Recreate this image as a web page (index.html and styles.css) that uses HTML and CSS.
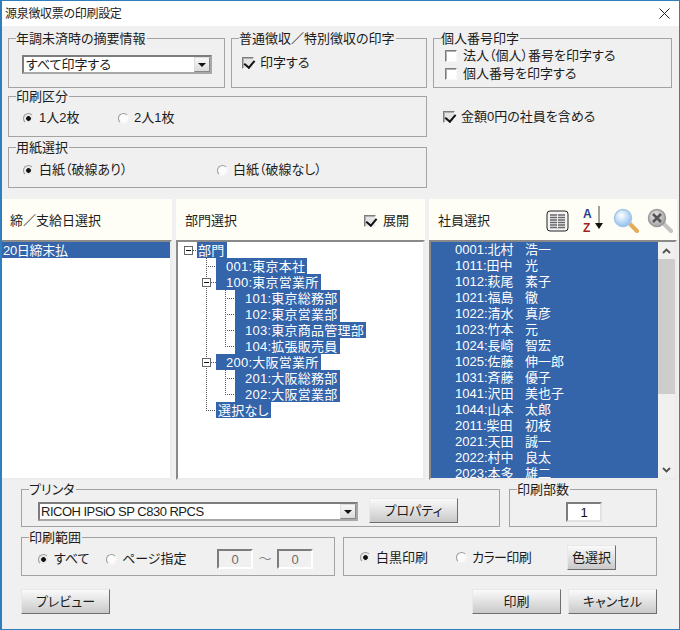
FILE: index.html
```html
<!DOCTYPE html>
<html lang="ja">
<head>
<meta charset="utf-8">
<title>源泉徴収票の印刷設定</title>
<link rel="stylesheet" href="styles.css">
</head>
<body>
<div class="window">
  <header class="titlebar">
    <span class="title">源泉徴収票の印刷設定</span>
    <svg class="close" width="11" height="11" viewBox="0 0 11 11"><path d="M.5.5l10 10M10.5.5l-10 10" stroke="#222" fill="none"/></svg>
  </header>

  <section class="top">
    <div class="group g-note">
      <div class="legend">年調未済時の摘要情報</div>
      <div class="combo combo-note"><span class="combo-text">すべて印字する</span><span class="combo-btn"><i class="tri"></i></span></div>
    </div>
    <div class="group g-print">
      <div class="legend">普通徴収／特別徴収の印字</div>
      <label class="opt opt-print"><input type="checkbox" class="check" checked>印字する</label>
    </div>
    <div class="group g-number">
      <div class="legend">個人番号印字</div>
      <label class="opt opt-num1"><input type="checkbox" class="check">法人（個人）番号を印字する</label>
      <label class="opt opt-num2"><input type="checkbox" class="check">個人番号を印字する</label>
    </div>
    <div class="group g-wide">
      <div class="legend">印刷区分</div>
      <div class="radios radios-kind">
        <label class="opt"><input type="radio" class="radio" name="kind" checked>1人2枚</label>
        <label class="opt"><input type="radio" class="radio" name="kind">2人1枚</label>
      </div>
    </div>
    <label class="opt opt-zero"><input type="checkbox" class="check" checked>金額0円の社員を含める</label>
    <div class="group g-wide g-paper">
      <div class="legend">用紙選択</div>
      <div class="radios radios-paper">
        <label class="opt"><input type="radio" class="radio" name="paper" checked>白紙（破線あり）</label>
        <label class="opt"><input type="radio" class="radio" name="paper">白紙（破線なし）</label>
      </div>
    </div>
  </section>

  <section class="panels">
    <div class="panel">
      <div class="panel-head"><span>締／支給日選択</span></div>
      <div class="list list-days"><div class="day">20日締末払</div></div>
    </div>
    <div class="panel">
      <div class="panel-head head-dept">
        <span>部門選択</span>
        <label class="opt opt-expand"><input type="checkbox" class="check" checked>展開</label>
      </div>
      <div class="list tree">
        <svg class="tree-lines" width="120" height="180" viewBox="0 0 120 180">
          <g fill="none" stroke="#555" stroke-dasharray="1 1">
            <path d="M15 8.5h4M28.500 16v152M28 24.500h10M33 40.500h5M33 120.500h5M28 168.500h10"/>
            <path d="M47.500 48v56M47 56.500h10M47 72.500h10M47 88.500h10M47 104.500h10"/>
            <path d="M47.500 128v24M47 136.500h10M47 152.500h10"/>
          </g>
          <g fill="#fff" stroke="#666">
            <rect x="6.500" y="4.500" width="8" height="8"/>
            <rect x="24.500" y="36.500" width="8" height="8"/>
            <rect x="24.500" y="116.500" width="8" height="8"/>
          </g>
          <path d="M8 8.500h5M26 40.500h5M26 120.500h5" stroke="#111"/>
        </svg>
        <div class="node-row"><span class="node lv0">部門</span></div>
        <div class="node-row"><span class="node lv1">001:東京本社</span></div>
        <div class="node-row"><span class="node lv1">100:東京営業所</span></div>
        <div class="node-row"><span class="node lv2">101:東京総務部</span></div>
        <div class="node-row"><span class="node lv2">102:東京営業部</span></div>
        <div class="node-row"><span class="node lv2">103:東京商品管理部</span></div>
        <div class="node-row"><span class="node lv2">104:拡張販売員</span></div>
        <div class="node-row"><span class="node lv1">200:大阪営業所</span></div>
        <div class="node-row"><span class="node lv2">201:大阪総務部</span></div>
        <div class="node-row"><span class="node lv2">202:大阪営業部</span></div>
        <div class="node-row"><span class="node lv1 none">選択なし</span></div>
      </div>
    </div>
    <div class="panel">
      <div class="panel-head head-emp">
        <span class="emp-title">社員選択</span>
        <svg class="ic-table" width="23" height="22" viewBox="0 0 23 22">
          <rect x="1" y="1" width="21" height="20" rx="3" fill="#f4f4f4" stroke="#222"/>
          <path d="M4 5h15M4 7.500h15M4 10h15M4 12.500h15M4 15h15M4 17.500h15" stroke="#666" stroke-width="1.500"/>
          <path d="M11.500 4v14" stroke="#eee"/>
        </svg>
        <span class="ic-sort"><span class="sort-letters"><b class="sort-a">A</b><b class="sort-z">Z</b></span>
          <svg width="8" height="25" viewBox="0 0 8 25"><path d="M4 0v20" stroke="#444"/><path d="M0 17h8l-4 6z" fill="#111"/></svg>
        </span>
        <svg class="ic-lens" width="26" height="25" viewBox="0 0 26 25">
          <defs><radialGradient id="lensBlue" cx=".4" cy=".35" r=".7"><stop offset="0" stop-color="#fff"/><stop offset="1" stop-color="#8cbcf0"/></radialGradient></defs>
          <path d="M16 15l8 8" stroke="#e3ad58" stroke-width="4" stroke-linecap="round"/>
          <circle cx="10" cy="10" r="8.500" fill="url(#lensBlue)" stroke="#a4c6e6" stroke-width="1.500"/>
        </svg>
        <svg class="ic-clear" width="26" height="25" viewBox="0 0 26 25">
          <defs><radialGradient id="lensGray" cx=".4" cy=".35" r=".7"><stop offset="0" stop-color="#e6e6e6"/><stop offset="1" stop-color="#a0a0a0"/></radialGradient></defs>
          <path d="M16 15l8 8" stroke="#c4c4c4" stroke-width="4" stroke-linecap="round"/>
          <circle cx="10" cy="10" r="8.500" fill="url(#lensGray)" stroke="#9a9a9a" stroke-width="1.500"/>
          <path d="M6 6l8 8M14 6l-8 8" stroke="#555" stroke-width="2.500"/>
        </svg>
      </div>
      <div class="list emp">
        <div class="emp-rows">
          <div class="emp-row"><span class="emp-name">0001:北村</span><span>浩一</span></div>
          <div class="emp-row"><span class="emp-name">1011:田中</span><span>光</span></div>
          <div class="emp-row"><span class="emp-name">1012:萩尾</span><span>素子</span></div>
          <div class="emp-row"><span class="emp-name">1021:福島</span><span>徹</span></div>
          <div class="emp-row"><span class="emp-name">1022:清水</span><span>真彦</span></div>
          <div class="emp-row"><span class="emp-name">1023:竹本</span><span>元</span></div>
          <div class="emp-row"><span class="emp-name">1024:長崎</span><span>智宏</span></div>
          <div class="emp-row"><span class="emp-name">1025:佐藤</span><span>伸一郎</span></div>
          <div class="emp-row"><span class="emp-name">1031:斉藤</span><span>優子</span></div>
          <div class="emp-row"><span class="emp-name">1041:沢田</span><span>美也子</span></div>
          <div class="emp-row"><span class="emp-name">1044:山本</span><span>太郎</span></div>
          <div class="emp-row"><span class="emp-name">2011:柴田</span><span>初枝</span></div>
          <div class="emp-row"><span class="emp-name">2021:天田</span><span>誠一</span></div>
          <div class="emp-row"><span class="emp-name">2022:村中</span><span>良太</span></div>
          <div class="emp-row"><span class="emp-name">2023:本多</span><span>雄二</span></div>
        </div>
        <div class="scrollbar">
          <span class="sb-btn"><svg width="9" height="6" viewBox="0 0 9 6"><path d="M1 5l3.500-3.500L8 5" fill="none" stroke="#505050" stroke-width="1.800"/></svg></span>
          <span class="sb-thumb"></span>
          <span class="sb-track"></span>
          <span class="sb-btn"><svg width="9" height="6" viewBox="0 0 9 6"><path d="M1 1l3.500 3.500L8 1" fill="none" stroke="#505050" stroke-width="1.800"/></svg></span>
        </div>
      </div>
    </div>
  </section>

  <section class="bottom">
    <div class="bottom-row row-printer">
      <div class="group g-printer">
        <div class="legend">プリンタ</div>
        <div class="printer-line">
          <div class="combo combo-printer"><span class="combo-text">RICOH IPSiO SP C830 RPCS</span><span class="combo-btn"><i class="tri"></i></span></div>
          <button class="btn btn-prop">プロパティ</button>
        </div>
      </div>
      <div class="group g-copies">
        <div class="legend">印刷部数</div>
        <input class="num num-copies" value="1">
      </div>
    </div>
    <div class="bottom-row row-range">
      <div class="group g-half">
        <div class="legend">印刷範囲</div>
        <div class="range-line">
          <label class="opt opt-all"><input type="radio" class="radio" name="range" checked>すべて</label>
          <label class="opt opt-page"><input type="radio" class="radio" name="range">ページ指定</label>
          <input class="num num-page" value="0" disabled>
          <span class="tilde">〜</span>
          <input class="num num-page" value="0" disabled>
        </div>
      </div>
      <div class="group g-half">
        <div class="color-line">
          <label class="opt opt-mono"><input type="radio" class="radio" name="color" checked>白黒印刷</label>
          <label class="opt opt-color"><input type="radio" class="radio" name="color">カラー印刷</label>
          <button class="btn btn-color">色選択</button>
        </div>
      </div>
    </div>
    <div class="bottom-row row-actions">
      <button class="btn btn-action">プレビュー</button>
      <div class="actions-right">
        <button class="btn btn-action">印刷</button>
        <button class="btn btn-action">キャンセル</button>
      </div>
    </div>
  </section>
</div>
</body>
</html>
```
FILE: styles.css
```css
* { box-sizing: border-box; }
html, body { margin: 0; padding: 0; }
body {
  font-family: "Liberation Sans", "Noto Sans CJK JP", sans-serif;
  font-size: 13px;
  line-height: 16px;
  color: #1c1c1c;
  font-feature-settings: "palt";
}
.window {
  width: 680px;
  height: 630px;
  background: #f0f0f0;
  border: 1px solid #2f7fbf;
  border-left-width: 2px;
  overflow: hidden;
}

/* title bar */
.titlebar {
  height: 25px;
  background: #fff;
  display: flex;
  align-items: center;
  justify-content: space-between;
  padding: 0 5px 0 3px;
}
.title { font-size: 12px; letter-spacing: -.3px; }
.close { margin-right: 4px; }

/* group boxes */
.group {
  border: 1px solid #a3a3a3;
  min-width: 0;
}
.legend {
  width: fit-content;
  margin: -8px 0 0 7px;
  padding: 0 1px 0 0;
  background: #f0f0f0;
}

/* options */
.opt {
  display: flex;
  align-items: center;
  white-space: nowrap;
}
.check, .radio {
  appearance: none;
  margin: 0;
  flex: none;
  position: relative;
}
.check {
  width: 12px;
  height: 12px;
  margin-right: 6px;
  background: #fff;
  border: 1px solid;
  border-color: #7d7d7d #f8f8f8 #f8f8f8 #7d7d7d;
  box-shadow: inset 1px 1px 0 #b0b0b0;
}
.check:checked { background: #e4e4e4; }
.check:checked::after {
  content: "";
  position: absolute;
  left: 3px;
  top: 0;
  width: 5px;
  height: 8px;
  border: solid #111;
  border-width: 0 2px 2px 0;
  transform: rotate(40deg);
}
.radio {
  width: 11px;
  height: 11px;
  margin-right: 5px;
  border-radius: 50%;
  background: #fbfbfb;
  border: 1px solid;
  border-color: #9a9a9a #f4f4f4 #f4f4f4 #9a9a9a;
}
.radio:checked {
  background: radial-gradient(circle at 50% 50%, #111 0 2px, #e8e8e8 2.7px);
}

/* top area */
.top {
  display: grid;
  grid-template-columns: 217px 196px 239px;
  grid-template-rows: 50px 41px 41px;
  column-gap: 6px;
  row-gap: 8px;
  padding: 12px 0 0 6px;
}
.g-wide { grid-column: 1 / 3; }
.g-paper { margin-top: 2px; height: 41px; }
.combo {
  display: flex;
  align-items: center;
  height: 19px;
  background: #fff;
  border: 2px solid;
  border-color: #7d7d7d #a8a8a8 #a8a8a8 #7d7d7d;
}
.combo-text { flex: 1; padding-left: 1px; white-space: nowrap; }
.combo-btn {
  width: 16px;
  height: 15px;
  display: flex;
  align-items: center;
  justify-content: center;
  background: linear-gradient(#f8f8f8, #dcdcdc);
  border: 1px solid #dedede;
  border-right-color: #888;
  border-bottom-color: #888;
}
.tri {
  border: solid transparent;
  border-width: 4px 4px 0;
  border-top-color: #111;
}
.combo-note { margin: 8px 0 0 13px; width: 190px; }
.combo-note .combo-text { padding-left: 2px; }
.opt-print { margin: 8px 0 0 10px; }
.opt-num1 { margin: 1px 0 0 11px; }
.opt-num2 { margin: 2px 0 0 11px; }
.opt-zero { align-self: start; margin: 13px 0 0 10px; }
.radios { display: flex; }
.radios-kind { margin: 5px 0 0 14px; }
.radios-kind .opt { width: 95px; }
.radios-paper { margin: 6px 0 0 14px; }
.radios-paper .opt { width: 194px; }

/* panels */
.panels {
  display: grid;
  grid-template-columns: 170px 249px 248px;
  column-gap: 4px;
  margin-top: 13px;
}
.panel-head {
  height: 41px;
  background: #fffef6;
  display: flex;
  align-items: center;
  padding: 2px 0 0 8px;
}
.head-dept { padding: 2px 16px 0 9px; justify-content: space-between; }
.opt-expand .check { margin-right: 7px; }
.head-emp { padding-left: 9px; }
.emp-title { width: 108px; flex: none; }
.ic-sort { display: flex; margin-left: 14px; width: 20px; }
.sort-letters { display: flex; flex-direction: column; width: 12px; margin-top: 1px; font-size: 12px; }
.sort-letters b { display: block; height: 14px; line-height: 14px; }
.sort-a { color: #1f3f8f; }
.sort-z { color: #a51e22; }
.ic-lens { margin-left: 10px; }
.ic-clear { margin-left: 8px; }
.list {
  height: 240px;
  background: #fff;
  border: 2px solid;
  border-color: #8a8a8a #ececec #ececec #8a8a8a;
  overflow: hidden;
  line-height: 18px;
}
.list-days { border-left-width: 0; }
.day {
  background: #3464aa;
  color: #fff;
  height: 16px;
  padding-left: 1px;
  letter-spacing: -.3px;
}

/* tree */
.tree { position: relative; }
.tree-lines { position: absolute; left: 0; top: 0; }
.node-row { height: 16px; white-space: nowrap; }
.node {
  display: inline-block;
  height: 16px;
  background: #3464aa;
  color: #fff;
  padding: 0 2px 0 10px;
  letter-spacing: .25px;
}
.lv0 { margin-left: 19px; padding-left: 1px; }
.lv1 { margin-left: 38px; }
.lv2 { margin-left: 57px; }
.none { padding-left: 2px; }

/* employees */
.emp { display: flex; background: #3464aa; }
.emp-rows { flex: 1; margin-top: -1px; padding-left: 24px; color: #fff; }
.emp-row { display: flex; height: 16px; white-space: nowrap; }
.emp-name { width: 70px; flex: none; }
.scrollbar {
  width: 17px;
  flex: none;
  display: flex;
  flex-direction: column;
  background: #f0f0f0;
}
.sb-btn {
  height: 17px;
  flex: none;
  display: flex;
  align-items: center;
  justify-content: center;
}
.sb-thumb { height: 135px; flex: none; background: #cdcdcd; }
.sb-track { flex: 1; }

/* bottom */
.bottom { padding: 0 0 0 19px; }
.bottom-row { display: flex; }
.row-printer { margin-top: 9px; gap: 9px; }
.row-range { margin-top: 10px; gap: 8px; }
.row-actions { margin-top: 13px; width: 636px; justify-content: space-between; }
.g-printer { width: 479px; height: 38px; }
.g-copies { width: 148px; height: 38px; }
.g-half { width: 314px; height: 39px; }
.printer-line { display: flex; align-items: center; margin: 0 0 0 16px; }
.combo-printer { width: 320px; margin-top: 2px; }
.combo-printer .combo-text { letter-spacing: -.5px; }
.btn {
  font: inherit;
  color: inherit;
  font-feature-settings: "palt";
  padding: 0;
  background: linear-gradient(#fafafa, #c9c9c9);
  border: 1px solid;
  border-color: #e8e8e8 #6e6e6e #6e6e6e #e8e8e8;
}
.btn-prop { width: 89px; height: 25px; margin-left: 11px; }
.btn-action { width: 89px; height: 25px; }
.btn-color { width: 49px; height: 25px; margin-left: 26px; }
.actions-right { display: flex; gap: 7px; }
.num {
  font: inherit;
  text-align: center;
  padding: 0;
  color: #111;
  background: #fff;
  border: 2px solid;
  border-color: #7d7d7d #e2e2e2 #e2e2e2 #7d7d7d;
  outline: none;
}
.num-copies { display: block; width: 36px; height: 20px; margin: 4px 0 0 56px; }
.num-page { width: 36px; height: 20px; background: #f0f0f0; color: #6d6d6d; border-color: #7d7d7d #fff #fff #7d7d7d; }
.range-line { display: flex; align-items: center; margin: 3px 0 0 16px; }
.opt-all { width: 68px; }
.opt-page { width: 111px; }
.opt-page .radio { margin-right: 5px; }
.tilde { width: 24px; text-align: center; color: #888; }
.color-line { display: flex; align-items: center; height: 37px; padding: 2px 0 0 16px; }
.opt-mono { width: 96px; }
.opt-color { width: 85px; letter-spacing: -.6px; }
```
